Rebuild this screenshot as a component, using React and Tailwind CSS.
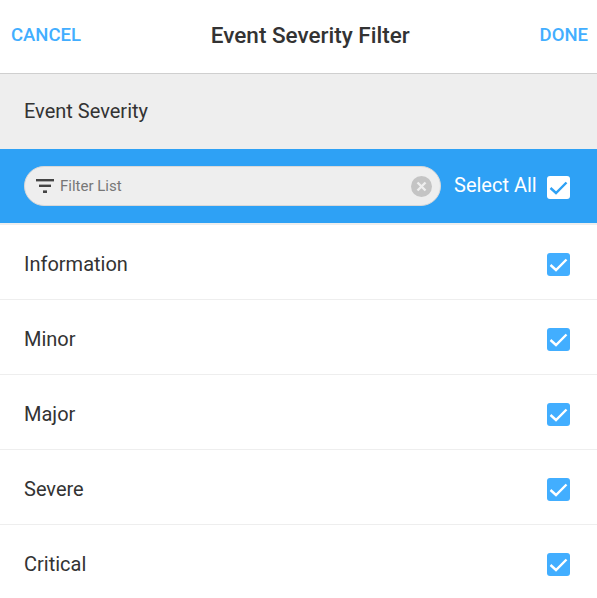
import React from 'react';

const items = ['Information', 'Minor', 'Major', 'Severe', 'Critical'];

const Check = ({ white }) => (
  <div className={`flex h-[23px] w-[23px] items-center justify-center rounded-[3px] ${white ? 'bg-white' : 'bg-[#42aeff]'}`}>
    <svg width="23" height="23" viewBox="0 0 23 23" fill="none">
      <path d="M3.5 12 L9 17 L19.5 6.5" stroke={white ? '#2ea1f5' : '#ffffff'} strokeWidth="2.4" />
    </svg>
  </div>
);

const App = () => {
  return (
    <div className="h-[598px] w-[597px] overflow-hidden bg-white font-['Roboto',sans-serif] text-[#333333]">
      <div className="flex h-[74px] items-center justify-between border-b border-[#cfcfcf] pb-px pl-[11px] pr-[9px]">
        <span className="text-[18.5px] font-medium text-[#42aeff]">CANCEL</span>
        <h1 className="text-[22.5px] font-medium">Event Severity Filter</h1>
        <span className="text-[18.5px] font-medium text-[#42aeff]">DONE</span>
      </div>
      <div className="flex h-[75px] items-center bg-[#eeeeee] pb-[2px] pl-6 text-[20px]">Event Severity</div>
      <div className="flex h-[74px] items-center bg-[#2ea1f5] pl-6 pr-[27px]">
        <div className="flex h-10 w-[417px] items-center rounded-full border border-[#d8d8d8] bg-[#eeeeee] pl-[11px] pr-2">
          <svg width="18" height="14" viewBox="0 0 18 14" fill="#444444">
            <rect x="0" y="0" width="18" height="2.4" />
            <rect x="3" y="5.6" width="12" height="2.4" />
            <rect x="7" y="11.4" width="4" height="2.6" />
          </svg>
          <span className="ml-[6px] flex-1 text-[15px] text-[#777777]">Filter List</span>
          <div className="flex h-[21px] w-[21px] items-center justify-center rounded-full bg-[#c4c4c4]">
            <svg width="11" height="11" viewBox="0 0 11 11" fill="none">
              <path d="M1.5 1.5 L9.5 9.5 M9.5 1.5 L1.5 9.5" stroke="#eeeeee" strokeWidth="2.4" />
            </svg>
          </div>
        </div>
        <span className="mb-[2px] ml-[13px] text-[20px] text-white">Select All</span>
        <div className="ml-[10px] mt-[2px]"><Check white /></div>
      </div>
      <div className="h-[2px] bg-[#eeeeee]" />
      {items.map((item) => (
        <div key={item} className="flex h-[75px] items-center justify-between border-b border-[#eeeeee] pl-6 pr-[27px] pt-1 text-[20px]">
          <span>{item}</span>
          <Check />
        </div>
      ))}
    </div>
  );
};

export default App;
